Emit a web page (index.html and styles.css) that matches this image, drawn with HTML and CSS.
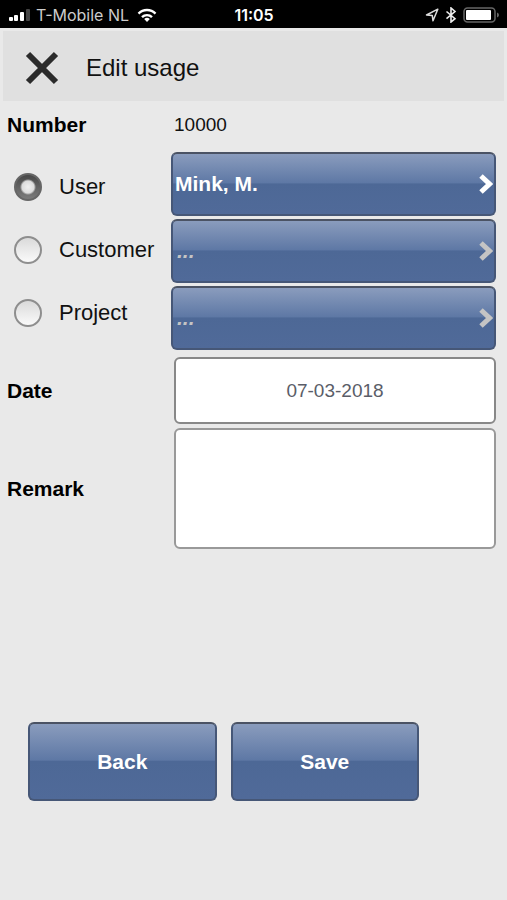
FILE: index.html
```html
<!DOCTYPE html>
<html lang="en">
<head>
    <meta charset="UTF-8">
    <meta name="viewport" content="width=device-width, initial-scale=1.0">
    <title>Edit usage</title>
    <link rel="stylesheet" href="styles.css">
</head>
<body>
    <div class="status-bar">
        <div class="status-left">
            <svg width="24" height="14" viewBox="0 0 24 14">
                <rect x="1" y="9" width="4" height="4" rx="1" fill="#fff"/>
                <rect x="6" y="7" width="4" height="6" rx="1" fill="#fff"/>
                <rect x="12" y="4" width="4" height="9" rx="1" fill="#fff"/>
                <rect x="18" y="1" width="4" height="12" rx="1" fill="#444"/>
            </svg>
            <span class="carrier">T-Mobile NL</span>
            <svg class="wifi" width="20" height="15" viewBox="0 0 20 15" fill="none" stroke="#fff" stroke-width="2.4">
                <path d="M1.5 5.6a12 12 0 0 1 17 0"/>
                <path d="M5 9.2a7 7 0 0 1 10 0"/>
                <path d="M10 14l-2.8-2.9a4 4 0 0 1 5.6 0z" fill="#fff" stroke="none"/>
            </svg>
        </div>
        <span class="time">11:05</span>
        <div class="status-right">
            <svg width="14" height="14" viewBox="0 0 14 14" fill="none" stroke="#ddd" stroke-width="1.5" stroke-linejoin="round">
                <path d="M12.8 1.2L1.5 7l5.8.6.7 5.200z"/>
            </svg>
            <svg width="12" height="16" viewBox="0 0 12 16" fill="none" stroke="#eee" stroke-width="1.6">
                <path d="M1.5 4.5L10 11.7 6 15V1l4 3.5-8.5 7.2"/>
            </svg>
            <svg width="37" height="16" viewBox="0 0 37 16">
                <rect x="1" y="1" width="31" height="14" rx="3.5" fill="none" stroke="#666" stroke-width="1.5"/>
                <rect x="3" y="3" width="25" height="10" rx="1" fill="#fff"/>
                <path d="M34 5.5q2 .8 2 2.5t-2 2.5z" fill="#666"/>
            </svg>
        </div>
    </div>

    <header class="header">
        <button type="button" class="close" aria-label="Close">
            <svg width="34" height="34" viewBox="0 0 34 34" stroke="#2b2b2b" stroke-width="6">
                <path d="M3 3l28 28M31 3L3 31"/>
            </svg>
        </button>
        <h1>Edit usage</h1>
    </header>

    <main>
        <form>
            <div class="row number-row">
                <span class="label">Number</span>
                <span class="value">10000</span>
            </div>

            <div class="choices">
                <div class="radios">
                    <label><input type="radio" name="type" value="user" checked>User</label>
                    <label><input type="radio" name="type" value="customer">Customer</label>
                    <label><input type="radio" name="type" value="project">Project</label>
                </div>
                <div class="pickers">
                    <button type="button" class="btn picker">
                        <span>Mink, M.</span>
                        <svg width="16" height="22" viewBox="0 0 16 22" fill="none" stroke="currentColor" stroke-width="5">
                            <path d="M4 3l8.5 8L4 19"/>
                        </svg>
                    </button>
                    <button type="button" class="btn picker empty" aria-label="Choose customer">
                        <span>...</span>
                        <svg width="16" height="22" viewBox="0 0 16 22" fill="none" stroke="currentColor" stroke-width="5">
                            <path d="M4 3l8.5 8L4 19"/>
                        </svg>
                    </button>
                    <button type="button" class="btn picker empty" aria-label="Choose project">
                        <span>...</span>
                        <svg width="16" height="22" viewBox="0 0 16 22" fill="none" stroke="currentColor" stroke-width="5">
                            <path d="M4 3l8.5 8L4 19"/>
                        </svg>
                    </button>
                </div>
            </div>

            <div class="row">
                <label class="label" for="date">Date</label>
                <input type="text" class="field date" id="date" name="date" value="07-03-2018">
            </div>
            <div class="row">
                <label class="label" for="remark">Remark</label>
                <textarea class="field remark" id="remark" name="remark"></textarea>
            </div>

            <div class="actions">
                <button type="button" class="btn">Back</button>
                <button type="submit" class="btn">Save</button>
            </div>
        </form>
    </main>
</body>
</html>
```
FILE: styles.css
```css
* {
    box-sizing: border-box;
}

body {
    margin: 0;
    font-family: "Liberation Sans", Arial, sans-serif;
    font-size: 22px;
    color: #111;
    background-color: #e9e9e9;
}

.status-bar {
    display: grid;
    grid-template-columns: 1fr auto 1fr;
    align-items: center;
    height: 28px;
    padding: 2px 7px 0 8px;
    background-color: #000;
    color: #fff;
    font-family: Inter, "Liberation Sans", sans-serif;
    font-size: 16px;
}

.status-left,
.status-right {
    display: flex;
    align-items: center;
}

.status-left {
    gap: 4px;
}

.status-right {
    justify-content: flex-end;
    gap: 6px;
}

.carrier {
    color: #ccc;
}

.wifi {
    margin-left: 4px;
}

.time {
    font-weight: 600;
}

.header {
    display: flex;
    align-items: center;
    gap: 27px;
    height: 70px;
    margin: 3px 3px 0;
    padding: 4px 22px 0;
    background-color: #e0e0e0;
}

.header h1 {
    margin: 0;
    font-size: 24px;
    font-weight: normal;
}

.close {
    display: flex;
    padding: 0;
    border: none;
    background: none;
    cursor: pointer;
}

form {
    padding: 0 11px 0 7px;
}

.row {
    display: grid;
    grid-template-columns: 167px 1fr;
    align-items: center;
    margin-bottom: 4px;
}

.number-row {
    height: 47px;
}

.label {
    font-size: 21px;
    font-weight: bold;
    color: #000;
}

.value {
    font-size: 19px;
}

.choices {
    display: grid;
    grid-template-columns: 164px 1fr;
    margin-bottom: 7px;
}

.radios {
    padding-top: 3px;
}

.radios label {
    display: flex;
    align-items: center;
    gap: 17px;
    height: 63px;
    padding-left: 7px;
}

.radios input {
    appearance: none;
    width: 28px;
    height: 28px;
    margin: 0;
    border: 2px solid #8e8e8e;
    border-radius: 50%;
    background: linear-gradient(#dadada, #fafafa);
}

.radios input:checked {
    border-color: #666;
    background: radial-gradient(circle, #f0f0f0 0, #dcdcdc 6px, transparent 8px), linear-gradient(#444, #808080);
    background-origin: border-box;
}

.pickers {
    display: grid;
    gap: 3px;
}

.btn {
    height: 79px;
    border: 2px solid #465777;
    border-top-color: #4b5364;
    border-radius: 6px;
    background: linear-gradient(#8a9cbd, #5e78a5 48%, #4d6896 50%, #506a99);
    color: #fff;
    font-family: inherit;
    font-size: 21px;
    font-weight: bold;
    cursor: pointer;
}

.picker {
    display: flex;
    justify-content: space-between;
    align-items: center;
    height: 64px;
    padding: 0 1px 0 2px;
}

.empty {
    padding-left: 4px;
    color: #c4c4c4;
    font-style: italic;
}

.field {
    width: 100%;
    border: 2px solid #888;
    border-radius: 6px;
    background-color: #fff;
    color: #5a5d68;
    font-family: inherit;
    font-size: 19px;
}

.date {
    height: 67px;
    text-align: center;
}

.remark {
    display: block;
    height: 121px;
    border-color: #999;
    resize: none;
}

.actions {
    display: grid;
    grid-template-columns: 1fr 1fr;
    gap: 14px;
    margin-top: 173px;
    padding: 0 77px 0 21px;
}
```
